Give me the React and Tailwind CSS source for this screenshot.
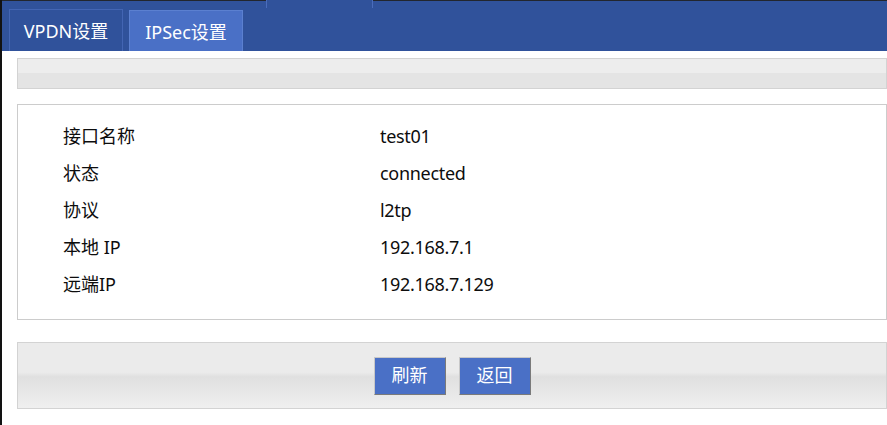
export default function App() {
  const rows = [
    ["接口名称", "test01"],
    ["状态", "connected"],
    ["协议", "l2tp"],
    ["本地 IP", "192.168.7.1"],
    ["远端IP", "192.168.7.129"],
  ];
  const font = { fontFamily: '"Noto Sans", "Noto Sans CJK SC", sans-serif' };
  return (
    <div className="flex w-full min-h-[425px] bg-white" style={font}>
      <div className="w-[2px] shrink-0 bg-[#121212]" />
      <div className="flex-1 flex flex-col min-w-0">
        <div className="relative flex flex-col">
          <div className="h-[1px] bg-[#22262e]" />
          <div className="absolute left-[264px] top-0 w-[107px] h-[8px] bg-[#30529b] border-l border-r border-[#4a6cbb]" />
          <div className="h-[50px] bg-[#30529b] flex items-end pl-[7px] gap-[6px]">
            <div className="w-[114px] h-[42px] border border-b-0 border-[#4365b3] flex items-center justify-center text-white text-[18px] pt-[2px]">
              VPDN设置
            </div>
            <div className="w-[114px] h-[41px] bg-[#4a70c6] border border-b-0 border-[#5b80d0] flex items-center justify-center text-white text-[18px] pt-[2px]">
              IPSec设置
            </div>
          </div>
        </div>

        <div className="ml-[15px] mt-[7px] h-[31px] border border-[#d3d3d3] bg-[linear-gradient(#ededed_50%,#e4e4e4_50%)]" />

        <div className="ml-[15px] mt-[15px] border border-[#cccccc] bg-white pt-[13px] pb-[16px] pl-[45px]">
          {rows.map(([k, v]) => (
            <div key={k} className="h-[37px] flex items-center text-[18px] text-[#0d0d0d]">
              <div className="w-[317px] shrink-0">{k}</div>
              <div className="tracking-[-0.3px]">{v}</div>
            </div>
          ))}
        </div>

        <div className="ml-[15px] mt-[22px] h-[67px] border border-[#d3d3d3] bg-[linear-gradient(#ebebeb_0%,#ebebeb_45%,#e0e0e0_52%,#efefef_100%)] flex items-center justify-center gap-[13px]">
          <button className="w-[72px] h-[38px] bg-[#4a70c6] text-white text-[18px] border border-t-[#c8c8c8] border-l-[#c8c8c8] border-b-[#7a7a7a] border-r-[#7a7a7a] flex items-center justify-center">
            刷新
          </button>
          <button className="w-[72px] h-[38px] bg-[#4a70c6] text-white text-[18px] border border-t-[#c8c8c8] border-l-[#c8c8c8] border-b-[#7a7a7a] border-r-[#7a7a7a] flex items-center justify-center">
            返回
          </button>
        </div>
      </div>
    </div>
  );
}
